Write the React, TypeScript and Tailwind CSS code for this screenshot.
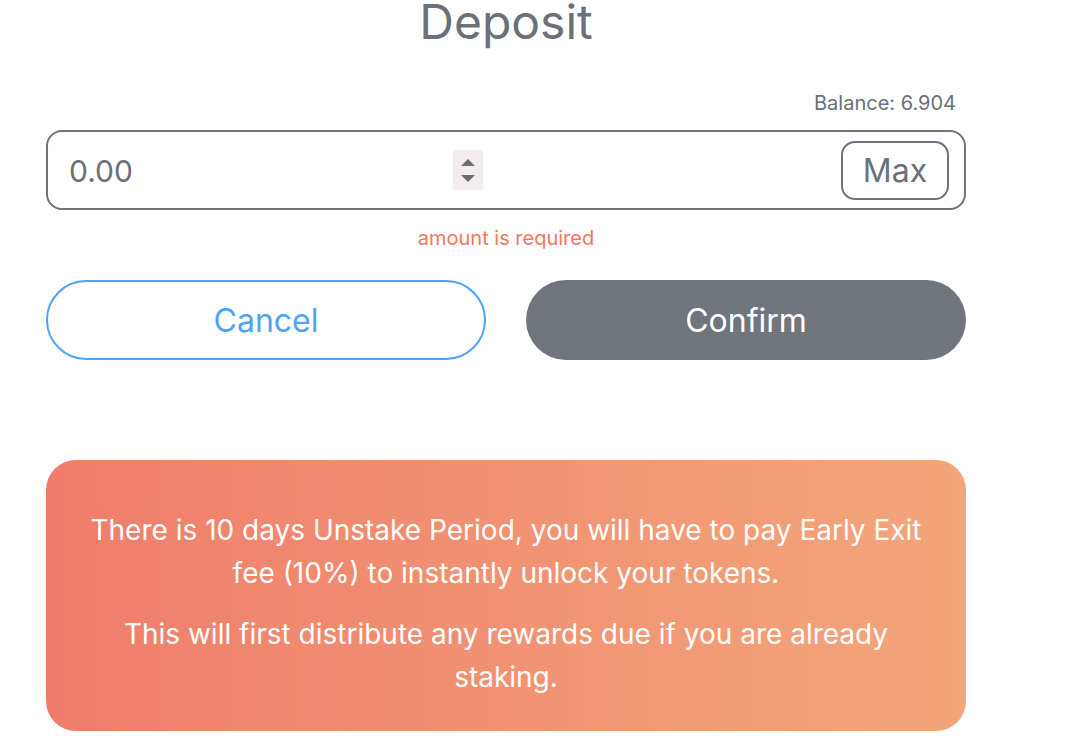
import { useState } from "react";

const Spinner = () => (
  <div className="flex h-[40px] w-[30px] flex-col items-center justify-center gap-[9px] bg-[#f3eded]">
    <svg width="14" height="7" viewBox="0 0 14 7">
      <path d="M7 0 L14 7 L0 7 Z" fill="#6b6d70" />
    </svg>
    <svg width="14" height="7" viewBox="0 0 14 7">
      <path d="M0 0 L14 0 L7 7 Z" fill="#6b6d70" />
    </svg>
  </div>
);

export default function App() {
  const [amount, setAmount] = useState("");

  return (
    <div className="min-h-screen bg-white font-['Inter',sans-serif] text-[#6b7079]">
      <div className="ml-[46px] w-[920px]">
        <h1 className="-mt-[2px] text-center text-5xl leading-none font-normal">
          Deposit
        </h1>

        <div className="mt-[43px] pr-[10px] text-right text-xl leading-7">
          Balance: 6.904
        </div>

        <div className="mt-[13px] flex h-[80px] items-center rounded-2xl border-2 border-[#6f737a] pr-[15px] pl-[21px]">
          <input
            type="text"
            value={amount}
            onChange={(e) => setAmount(e.target.value)}
            placeholder="0.00"
            className="w-[384px] bg-transparent pt-[2px] text-3xl text-[#6b7079] outline-none placeholder:text-[#6b7079]"
          />
          <Spinner />
          <div className="flex-1" />
          <button className="h-[59px] w-[108px] rounded-[14px] border-2 border-[#6f737a] pt-[2px] text-[32px] text-[#6b7079]">
            Max
          </button>
        </div>

        <p className="mt-[14px] text-center text-xl leading-7 text-[#f0785e]">
          amount is required
        </p>

        <div className="mt-[28px] grid grid-cols-2 gap-10">
          <button className="h-[80px] rounded-full border-2 border-[#4fa3f5] pt-[2px] text-[32px] text-[#4fa3f5]">
            Cancel
          </button>
          <button className="h-[80px] rounded-full bg-[#71757c] pt-[2px] text-[32px] text-white">
            Confirm
          </button>
        </div>

        <div className="mt-[100px] rounded-[30px] bg-gradient-to-r from-[#ef7d6b] to-[#f3a67a] px-10 pt-[49px] pb-[32px] text-center text-[28px] leading-[43px] text-white">
          <p>
            There is 10 days Unstake Period, you will have to pay Early Exit
            fee (10%) to instantly unlock your tokens.
          </p>
          <p className="mt-[18px]">
            This will first distribute any rewards due if you are already
            staking.
          </p>
        </div>
      </div>
    </div>
  );
}
